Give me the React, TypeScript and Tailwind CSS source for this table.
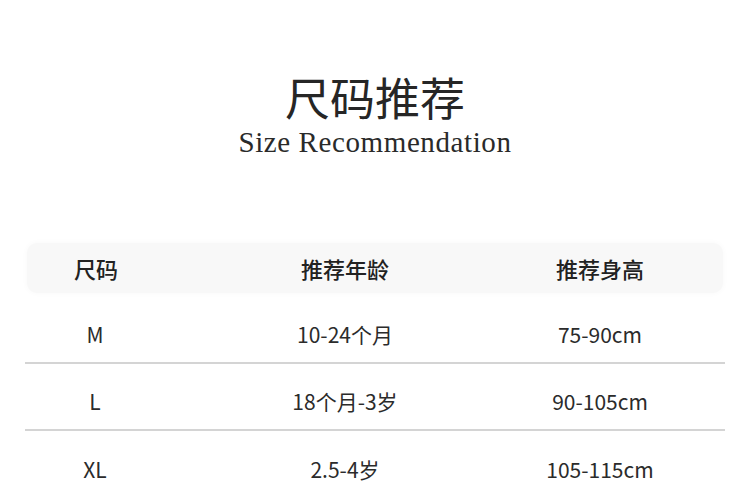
const rows = [
  { size: "M", age: "10-24个月", height: "75-90cm" },
  { size: "L", age: "18个月-3岁", height: "90-105cm" },
  { size: "XL", age: "2.5-4岁", height: "105-115cm" },
];

const cjk = "font-['Noto_Sans_CJK_SC','Noto_Sans',sans-serif]";

export default function App() {
  return (
    <div className="h-[500px] w-[750px] overflow-hidden bg-white">
      <div className="flex flex-col items-center pt-[74px]">
        <h1 className={`${cjk} text-[45px] leading-[45px] font-normal text-[#262626]`}>
          尺码推荐
        </h1>
        <p className="mt-[9px] font-['Liberation_Serif',serif] text-[29px] leading-[29px] tracking-[0.6px] text-[#2a2a2a]">
          Size Recommendation
        </p>
      </div>

      <div className={`${cjk} mt-[86px] px-[25px]`}>
        <div className="mx-[2px] grid h-[50px] grid-cols-[138px_360px_150px] items-center rounded-[10px] bg-[#f8f8f8] text-[22px] font-medium text-[#222] shadow-[0_0_6px_rgba(0,0,0,0.03)]">
          <span className="text-center">尺码</span>
          <span className="text-center">推荐年龄</span>
          <span className="text-center">推荐身高</span>
        </div>

        <div className="mt-[4px]">
          {rows.map((row, i) => (
            <div
              key={row.size}
              className={`grid h-[67px] grid-cols-[140px_360px_150px] items-center pt-[10px] text-[21px] text-[#2b2b2b] ${
                i < rows.length - 1 ? "border-b-2 border-[#d4d4d4]" : ""
              }`}
            >
              <span className="text-center">{row.size}</span>
              <span className="text-center">{row.age}</span>
              <span className="text-center">{row.height}</span>
            </div>
          ))}
        </div>
      </div>
    </div>
  );
}
